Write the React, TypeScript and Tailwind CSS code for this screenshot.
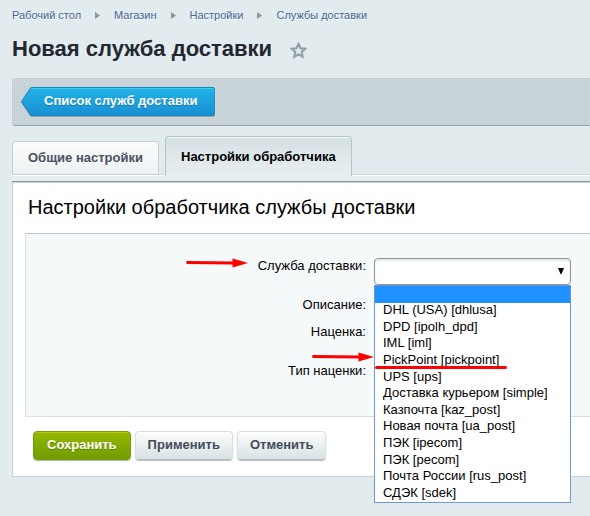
import { useState } from "react";

const crumbs = ["Рабочий стол", "Магазин", "Настройки", "Службы доставки"];

const services = [
  "DHL (USA) [dhlusa]",
  "DPD [ipolh_dpd]",
  "IML [iml]",
  "PickPoint [pickpoint]",
  "UPS [ups]",
  "Доставка курьером [simple]",
  "Казпочта [kaz_post]",
  "Новая почта [ua_post]",
  "ПЭК [ipecom]",
  "ПЭК [pecom]",
  "Почта России [rus_post]",
  "СДЭК [sdek]",
];

function Arrow({ className }: { className: string }) {
  return (
    <svg className={`absolute h-[10px] w-[62px] ${className}`} viewBox="0 0 62 10" aria-hidden="true">
      <path d="M1.5 4.5L48 5" stroke="#fe0000" strokeWidth="3" strokeLinecap="round" />
      <path d="M46.500 0.500L62 5L46.500 9.500Z" fill="#fe0000" />
    </svg>
  );
}

function Breadcrumbs() {
  return (
    <nav className="flex h-[15px] items-center text-[11px] leading-[15px] text-[#3f6496]">
      {crumbs.map((crumb, i) => (
        <div key={crumb} className="flex items-center">
          {i > 0 && (
            <svg className="mx-[14px] h-[7px] w-[5px]" viewBox="0 0 5 7" aria-hidden="true">
              <path d="M0 0L5 3.500L0 7Z" fill="#8b979f" />
            </svg>
          )}
          <a href="#" className="[text-shadow:0_1px_0_#fff]">{crumb}</a>
        </div>
      ))}
    </nav>
  );
}

function Toolbar() {
  return (
    <div className="mt-[15px] flex h-[48px] items-start rounded-l-[3px] border-b border-[#9ba8ae] bg-[#cbd6db] bg-[radial-gradient(circle_at_0.5px_0.5px,#b0bdc3_0.6px,transparent_0.6px),radial-gradient(circle_at_0.5px_0.5px,#b0bdc3_0.6px,transparent_0.6px)] bg-[length:4px_4px] bg-[position:0_0,2px_2px] pt-[9px] pl-[9px]">
      <a href="#" className="relative flex h-[29px] items-center pr-[18px] pl-[23px] text-[13px] leading-[16px] font-bold text-white">
        <svg className="absolute inset-0 h-[30px] w-full" viewBox="0 0 194 30" preserveAspectRatio="none" aria-hidden="true">
          <defs>
            <linearGradient id="blue" x1="0" y1="0" x2="0" y2="1">
              <stop offset="0" stopColor="#22b3e6" />
              <stop offset="1" stopColor="#198fd3" />
            </linearGradient>
          </defs>
          <path d="M0 15.500L9 2Q9.500 1 11 1H191Q194 1 194 4V27Q194 30 191 30H11Q9.500 30 9 29Z" fill="#8fa0a8" />
          <path d="M0 14.500L9 1Q9.500 0 11 0H191Q194 0 194 3V26Q194 29 191 29H11Q9.500 29 9 28Z" fill="#1688c6" />
          <path d="M1 14.500L10 1.500Q10.500 1 11 1H191Q193 1 193 3V26Q193 28 191 28H11Q10.500 28 10 27.500Z" fill="url(#blue)" />
          <path d="M10.500 1.500H192" stroke="#3fcdf3" />
        </svg>
        <span className="relative pb-[2px] [text-shadow:0_1px_0_#1579ad]">Список служб доставки</span>
      </a>
    </div>
  );
}

function Tabs() {
  return (
    <div role="tablist" className="mt-[10px] flex h-[40px] items-end gap-[6px] border-b border-white text-[13px] leading-[16px] font-bold shadow-[inset_0_-1px_0_#d0dadd]">
      <button role="tab" aria-selected="false" className="h-[34px] rounded-t-[4px] border border-[#c3ced3] bg-linear-to-b from-[#fbfcfc] to-[#eef2f3] px-[15px] text-[#48535f] shadow-[inset_0_1px_0_#fff]">
        Общие настройки
      </button>
      <button role="tab" aria-selected="true" className="-mb-px h-[40px] rounded-t-[4px] border border-b-0 border-[#b8c4ca] bg-linear-to-b from-[#d5e0e3] to-[#e8eff0] px-[15px] text-black shadow-[inset_0_1px_0_#f4f8f9]">
        Настройки обработчика
      </button>
    </div>
  );
}

function ServiceSelect() {
  const [value, setValue] = useState("");
  return (
    <div className="relative mr-[19px] h-[27px]">
      <select
        id="service"
        value={value}
        onChange={(e) => setValue(e.target.value)}
        className="block h-[27px] w-full appearance-none rounded-[4px] border border-[#8f9599] bg-white px-2 text-[13px] shadow-[inset_0_2px_2px_#e4e7e8]"
      >
        <option value=""></option>
        {services.map((s) => (
          <option key={s}>{s}</option>
        ))}
      </select>
      <svg className="pointer-events-none absolute top-[10px] right-[7px] h-[6px] w-[6px]" viewBox="0 0 6 6" aria-hidden="true">
        <path d="M0 0H6L3.500 6H2.500Z" fill="#000" />
      </svg>
      <div className="absolute top-full right-0 left-0 z-10 border border-[#7096d3] bg-white">
        <div className="h-[17px] bg-[#1e90ff]" />
        <ul className="grid h-[199px] auto-rows-fr text-[13px] leading-[15px] text-black">
          {services.map((s) => (
            <li key={s} className="relative flex items-center pb-[3px] pl-[8px] whitespace-nowrap">
              {s}
              {s.startsWith("PickPoint") && (
                <>
                  <Arrow className="-top-px right-full mr-px" />
                  <span className="absolute bottom-0 left-0 h-[3px] w-[132px] rounded-full bg-[#fe0000]" />
                </>
              )}
            </li>
          ))}
        </ul>
      </div>
    </div>
  );
}

function SettingsPanel() {
  return (
    <section className="border-b border-l border-[#c5d1d4] bg-white pl-[12px]">
      <h2 className="h-[51px] pt-[13px] pl-[3px] text-[20px] leading-[24px] text-black">
        Настройки обработчика службы доставки
      </h2>
      <div className="grid h-[184px] grid-cols-[minmax(0,1fr)_216px] content-start gap-x-[8px] border border-r-0 border-t-[#b9c6cc] border-b-[#d5e1e7] border-l-[#d5e1e7] bg-[#f5f9f9] pt-[24px] text-right text-[13px] leading-[15px] text-black">
        <label htmlFor="service" className="relative h-[39px]">
          <Arrow className="top-0 right-[118px]" />
          <span className="block">Служба доставки:</span>
        </label>
        <ServiceSelect />
        <div className="col-start-1 h-[27px]">Описание:</div>
        <div className="col-start-1 h-[39px]">Наценка:</div>
        <div className="col-start-1">Тип наценки:</div>
      </div>
      <div className="flex gap-[4px] pt-[14px] pb-[16px] pl-[8px] text-[13px] leading-[16px] font-bold">
        <button className="h-[29px] rounded-[4px] border border-[#729a0b] bg-linear-to-b from-[#95b900] to-[#729b00] px-[13px] pb-[2px] text-white shadow-[inset_0_1px_0_#b4cb10,0_1px_1px_#aab0a0] [text-shadow:0_1px_0_#5f8000]">
          Сохранить
        </button>
        <button className="h-[29px] rounded-[4px] border border-[#d9dfe1] border-b-[#b5bec2] bg-linear-to-b from-[#fdfdfd] to-[#d8e2e5] px-[12px] pb-[2px] text-[#424d5a] shadow-[0_1px_1px_#b5bbbe]">
          Применить
        </button>
        <button className="h-[29px] rounded-[4px] border border-[#d9dfe1] border-b-[#b5bec2] bg-linear-to-b from-[#fdfdfd] to-[#d8e2e5] px-[12px] pb-[2px] text-[#424d5a] shadow-[0_1px_1px_#b5bbbe]">
          Отменить
        </button>
      </div>
    </section>
  );
}

export default function App() {
  return (
    <main className="min-h-screen bg-[#e2ebed] pt-[8px] pl-[12px] font-['Liberation_Sans',Arial,sans-serif]">
      <Breadcrumbs />
      <header className="mt-[12px] flex h-[28px] items-center gap-[18px]">
        <h1 className="text-[22px] leading-[28px] font-bold text-[#23272f]">Новая служба доставки</h1>
        <button aria-label="Добавить в избранное">
          <svg className="mt-[2px] h-[17px] w-[17px]" viewBox="0 0 17 17" aria-hidden="true">
            <path d="M8.500 1.800L10.500 6.200L15.300 6.700L11.700 9.900L12.700 14.800L8.500 12.300L4.300 14.800L5.300 9.900L1.700 6.700L6.500 6.200Z" fill="none" stroke="#919ca8" strokeWidth="2" />
          </svg>
        </button>
      </header>
      <Toolbar />
      <Tabs />
      <div className="relative h-[6px] border-b border-[#8f9a9f] bg-[#e8eff0] shadow-[0_1px_0_#c9d2d5]" />
      <SettingsPanel />
    </main>
  );
}
